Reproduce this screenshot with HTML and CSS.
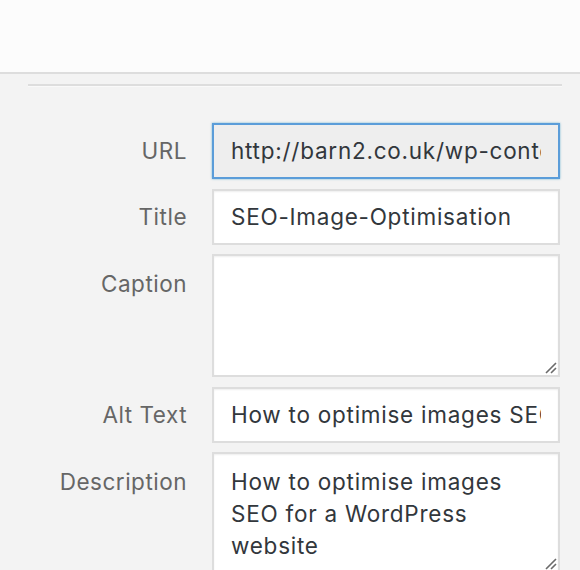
FILE: index.html
```html
<!DOCTYPE html>
<html>
<head>
<meta charset="utf-8">
<link rel="stylesheet" href="styles.css">
</head>
<body>
<div class="header"></div>
<div class="panel">
  <div class="divider"></div>
  <div class="form">
    <div class="label">URL</div>
    <div class="field field-focus"><div class="clip">http://barn2.co.uk/wp-content/uploads/SEO-Image-Optimisation.png</div></div>

    <div class="label">Title</div>
    <div class="field"><div class="clip">SEO-Image-Optimisation</div></div>

    <div class="label label-top">Caption</div>
    <div class="field area area-caption">
      <svg class="grip" width="14" height="14" viewBox="0 0 14 14"><path d="M13 3 L3 13 M13 8 L8 13" stroke="#6b6b6b" stroke-width="1.6" fill="none"/></svg>
    </div>

    <div class="label">Alt Text</div>
    <div class="field"><div class="clip">How to optimise images SEO for a WordPress website</div></div>

    <div class="label label-top">Description</div>
    <div class="field area area-desc">
      <div class="multi">How to optimise images SEO for a WordPress website</div>
      <svg class="grip" width="14" height="14" viewBox="0 0 14 14"><path d="M13 3 L3 13 M13 8 L8 13" stroke="#6b6b6b" stroke-width="1.6" fill="none"/></svg>
    </div>
  </div>
</div>
</body>
</html>
```

FILE: styles.css
```css
html, body {
  margin: 0;
  padding: 0;
  background: #f3f3f3;
  font-family: Inter, "Liberation Sans", Arial, sans-serif;
  overflow: hidden;
}
.header {
  height: 72px;
  background: #fcfcfc;
  border-bottom: 2px solid #dddddd;
}
.panel {
  background: #f3f3f3;
  padding: 10px 18px 0 28px;
  height: 600px;
}
.divider {
  border-top: 2px solid #dddddd;
  border-bottom: 1px solid #f9f9f9;
}
.form {
  margin-top: 36px;
  display: grid;
  grid-template-columns: 159px 348px;
  column-gap: 25px;
  row-gap: 9.5px;
}
.label {
  text-align: right;
  font-size: 22.5px;
  letter-spacing: 0.5px;
  line-height: 56px;
  color: #666666;
}
.label-top {
  padding-top: 2px;
}
.field {
  box-sizing: border-box;
  height: 56px;
  background: #ffffff;
  border: 2px solid #dddddd;
  box-shadow: inset 0 1px 2px rgba(0,0,0,0.07);
  padding: 0 17px;
  font-size: 22.5px;
  letter-spacing: 0.75px;
  line-height: 52px;
  color: #32373c;
  position: relative;
}
.field-focus {
  background: #eeeeee;
  border-color: #5b9dd9;
  box-shadow: 0 0 2px rgba(30,140,190,0.6);
}
.clip {
  overflow: hidden;
  white-space: nowrap;
}
.area-caption {
  height: 123px;
}
.area-desc {
  height: 121px;
  padding-top: 12px;
}
.multi {
  line-height: 32px;
  width: 310px;
}
.grip {
  position: absolute;
  right: 1px;
  bottom: 1px;
}
```
